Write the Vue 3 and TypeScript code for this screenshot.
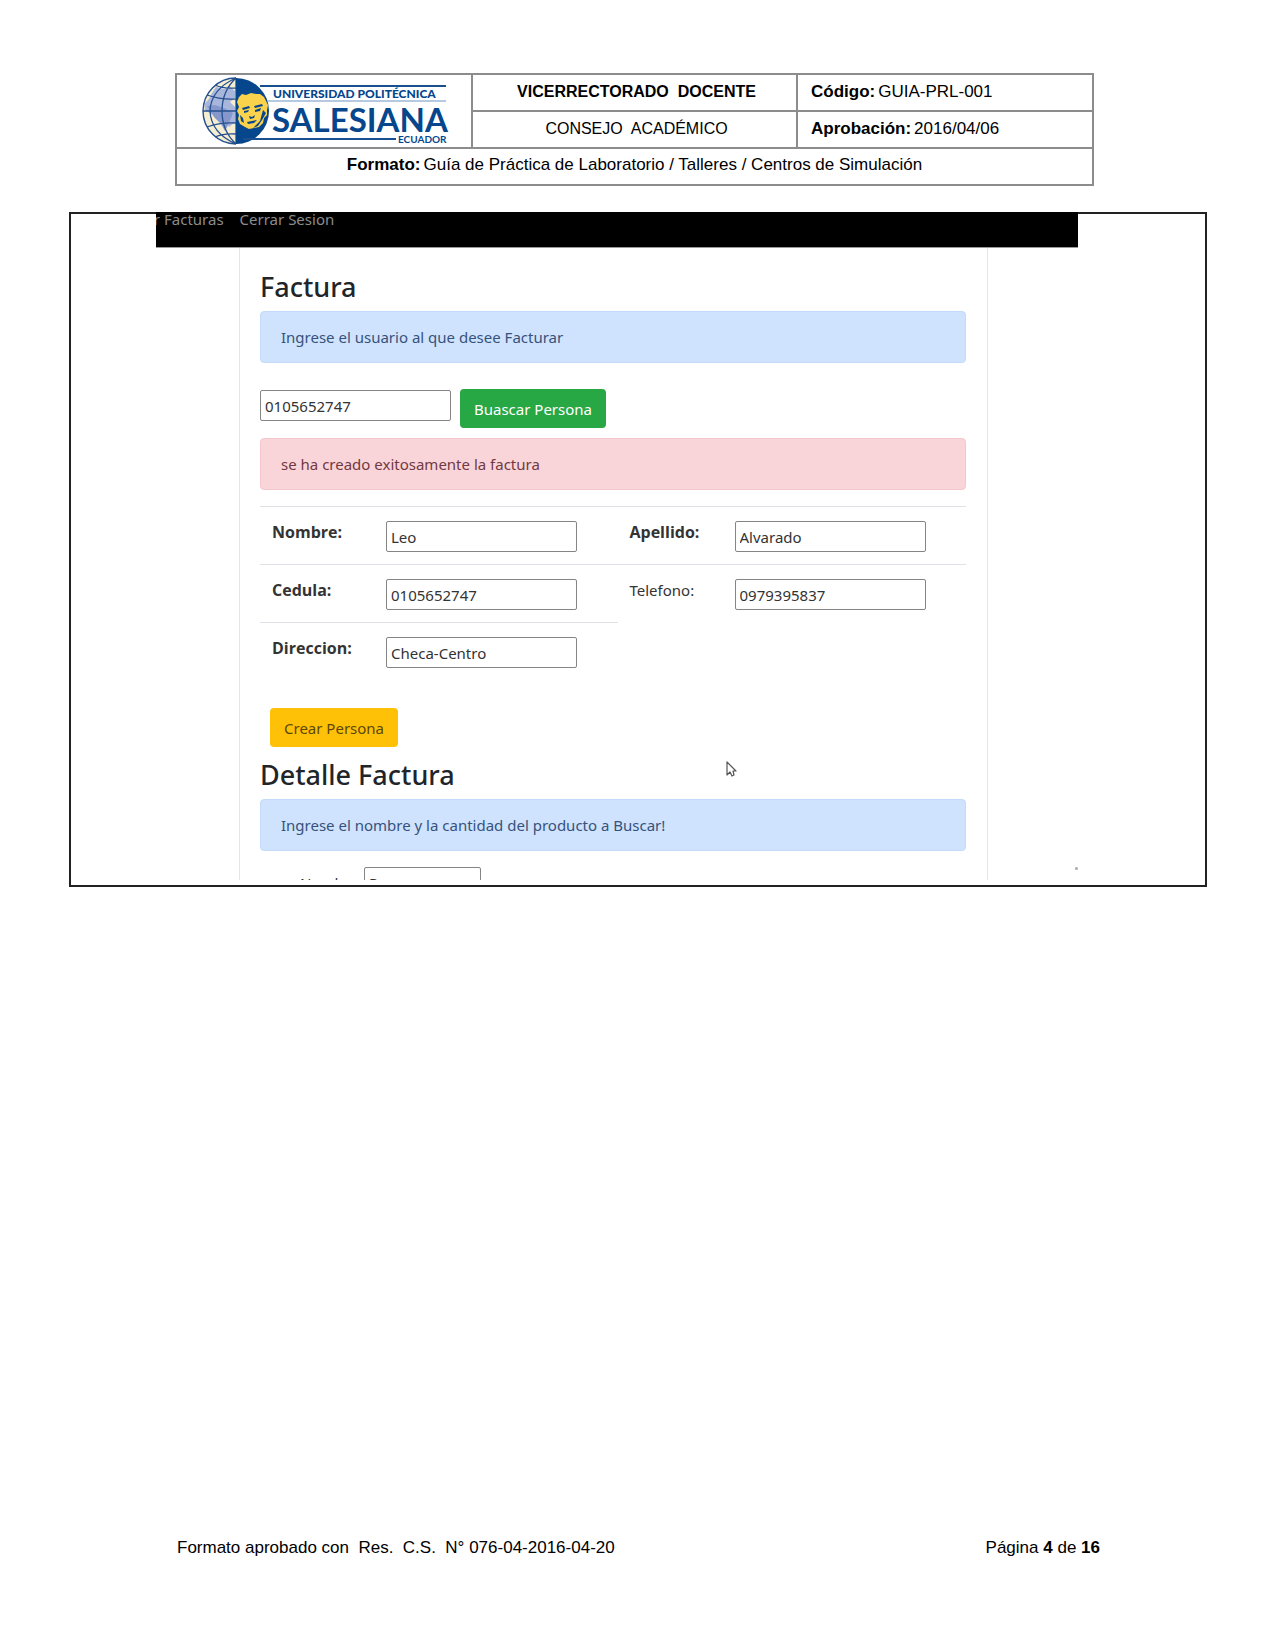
<script setup lang="ts">
import { ref } from 'vue'

interface Field {
  id: string
  label: string
  value: string
  strong: boolean
}

const cedulaBusqueda = ref('0105652747')
const producto = ref('Pera')

const rows = ref<Field[][]>([
  [
    { id: 'nombre', label: 'Nombre:', value: 'Leo', strong: true },
    { id: 'apellido', label: 'Apellido:', value: 'Alvarado', strong: true },
  ],
  [
    { id: 'cedula', label: 'Cedula:', value: '0105652747', strong: true },
    { id: 'telefono', label: 'Telefono:', value: '0979395837', strong: false },
  ],
  [{ id: 'direccion', label: 'Direccion:', value: 'Checa-Centro', strong: true }],
])
</script>

<template>
  <div class="page">
    <header class="doc-header">
      <table class="doc-table">
        <colgroup>
          <col class="col-logo" />
          <col class="col-title" />
          <col class="col-code" />
        </colgroup>
        <tbody>
          <tr>
            <td rowspan="2" class="logo-cell">
              <svg class="logo" viewBox="0 0 250 68" role="img" aria-label="Universidad Politécnica Salesiana Ecuador">
                <circle cx="34" cy="34" r="33" fill="#f6eed2" />
                <path d="M14 10 L22 12 L27 9 L33 14 V21 L28 25 L33 30 V45 L27 50 L23 44 L17 40 L9 37 L3 33 L2 27 L7 22 L10 16 Z" fill="#a9b6dc" />
                <path d="M5 29 L13 28 L22 31 L31 36 L27 46 L23 54 L19 47 L12 40 Z" fill="#8597cb" />
                <path d="M34 1 V67 M1 34 H34 M5 18 Q19 23 34 22 M5 50 Q19 45 34 46 M13 8 Q22 12 34 11 M13 60 Q22 56 34 57 M34 1 Q9 12 8 34 Q9 56 34 67 M34 1 Q20 14 20 34 Q20 54 34 67" fill="none" stroke="#24508f" stroke-width="1.3" />
                <path d="M34 1 A33 33 0 0 0 34 67" fill="none" stroke="#24508f" stroke-width="1.4" />
                <path d="M34 1 A33 33 0 0 1 34 67 Z" fill="#05468c" />
                <path d="M37 20 L40 17 L44 18 L49 16 L54 17 L58 17 L62 20 L64 24 L66 28 L65 33 L65 38 L62 41 L61 46 L57 50 L52 51 L47 52 L43 50 L38 47 L36 42 L37 38 L35 34 L37 30 L35 25 Z" fill="#fbd24b" />
                <path d="M40 31 L47 29 L48 31 L41 33 Z M52 29 L60 27 L61 29 L53 31 Z M42 34 L47 33 L46 35 L42 36 Z M53 33 L59 31 L58 34 L53 35 Z M47 39 L50 40 L53 38 L52 41 L48 42 Z M45 45 L50 44 L55 43 L52 46 L46 47 Z M38 38 L41 41 L42 46 L39 44 Z M61 33 L64 36 L60 43 L56 49 L51 51 L58 44 Z" fill="#05468c" />
                <path d="M58 9 H244 M41 62 H194" stroke="#174f91" stroke-width="2" />
                <path d="M65 24 H244" stroke="#6d93c2" stroke-width="1" />
                <g fill="#05468c" font-family="Lato, sans-serif">
                  <text x="71" y="21" font-size="12" font-weight="900">UNIVERSIDAD POLITÉCNICA</text>
                  <text x="70" y="55" font-size="33" font-weight="700">SALESIANA</text>
                  <text x="196" y="66" font-size="10" font-weight="700">ECUADOR</text>
                </g>
              </svg>
            </td>
            <th scope="col" class="center title">VICERRECTORADO&nbsp; DOCENTE</th>
            <td class="code"><b>Código:</b><span>GUIA-PRL-001</span></td>
          </tr>
          <tr>
            <td class="center title">CONSEJO&nbsp; ACADÉMICO</td>
            <td class="code"><b>Aprobación:</b><span>2016/04/06</span></td>
          </tr>
          <tr>
            <td colspan="3" class="center format"><b>Formato:</b><span>Guía de Práctica de Laboratorio / Talleres / Centros de Simulación</span></td>
          </tr>
        </tbody>
      </table>
    </header>

    <main class="frame">
      <section class="shot">
        <nav class="navbar">
          <span class="nav-rest">r</span>
          <a href="#facturas">Facturas</a>
          <a href="#salir">Cerrar Sesion</a>
        </nav>

        <div class="card">
          <h2>Factura</h2>
          <p class="alert info">Ingrese el usuario al que desee Facturar</p>

          <form class="search" @submit.prevent>
            <input v-model="cedulaBusqueda" class="box" type="text" aria-label="Cedula del usuario" />
            <button type="submit" class="btn green">Buascar Persona</button>
          </form>

          <p class="alert danger">se ha creado exitosamente la factura</p>

          <table class="person">
            <colgroup>
              <col class="c-label" />
              <col class="c-field" />
              <col class="c-label2" />
              <col class="c-field" />
            </colgroup>
            <tbody>
              <tr v-for="(row, i) in rows" :key="i">
                <template v-for="f in row" :key="f.id">
                  <td><label :for="f.id" :class="{ strong: f.strong }">{{ f.label }}</label></td>
                  <td><input :id="f.id" v-model="f.value" class="box" type="text" /></td>
                </template>
              </tr>
            </tbody>
          </table>

          <button type="button" class="btn yellow">Crear Persona</button>

          <h2>Detalle Factura</h2>
          <p class="alert info">Ingrese el nombre y la cantidad del producto a Buscar!</p>

          <div class="product">
            <label for="producto">Nombre:</label>
            <input id="producto" v-model="producto" class="box small" type="text" />
          </div>

          <svg class="cursor" viewBox="0 0 12 18" aria-hidden="true">
            <path d="M1 1 V14 L4 11 L6 15 L8 14 L7 10 H10 Z" fill="#fff" stroke="#555" stroke-width="1.2" stroke-linejoin="round" />
          </svg>
        </div>
        <span class="speck"></span>
      </section>
    </main>

    <footer class="doc-footer">
      <span>Formato aprobado con&nbsp; Res.&nbsp; C.S.&nbsp; N° 076-04-2016-04-20</span>
      <span>Página <b>4</b> de <b>16</b></span>
    </footer>
  </div>
</template>

<style>
body {
  margin: 0;
  background: #fff;
}
</style>

<style scoped>
.page {
  box-sizing: border-box;
  min-height: 100vh;
  display: flex;
  flex-direction: column;
  padding: 73px 68px 92px 69px;
  font-family: 'Liberation Sans', Arial, sans-serif;
  font-size: 17px;
  line-height: 20px;
  color: #000;
}
.doc-header {
  margin: 0 113px 26px 106px;
}
.doc-table {
  width: 100%;
  table-layout: fixed;
  border-collapse: collapse;
}
.col-logo {
  width: 296px;
}
.col-code {
  width: 296px;
}
.doc-table td,
.doc-table th {
  height: 33px;
  padding: 0 0 2px;
  border: 2px solid #8c8c8c;
  vertical-align: middle;
}
.doc-table .logo-cell {
  padding: 0;
}
.doc-table .center {
  text-align: center;
}
.doc-table .title {
  padding-left: 4px;
  font-size: 16px;
}
.doc-table .code {
  padding-left: 13px;
}
.doc-table .format {
  height: 31px;
  padding-bottom: 4px;
}
.doc-table span {
  margin-left: 3px;
}
.logo {
  display: block;
  width: 250px;
  height: 68px;
  margin-left: 25px;
}

.frame {
  border: 2px solid #222;
  padding: 0 127px 5px 85px;
}
.shot {
  position: relative;
  margin-top: -2px;
  font-family: 'Noto Sans', 'Open Sans', sans-serif;
  font-size: 15px;
  line-height: 24px;
  color: #333;
}
.navbar {
  display: flex;
  align-items: flex-start;
  height: 35px;
  overflow: hidden;
  background: #000;
  border-bottom: 1px solid #999;
  line-height: 15px;
}
.navbar a,
.nav-rest {
  color: #8c8c8c;
  text-decoration: none;
}
.nav-rest {
  width: 4px;
  margin-right: 4px;
  direction: rtl;
  overflow: hidden;
}
.navbar a {
  margin-right: 16px;
}

.card {
  position: relative;
  margin: 0 90px 0 83px;
  padding: 21px 21px 0 20px;
  border: solid #e6e6e6;
  border-width: 0 1px;
}
h2 {
  margin: 0 0 7px;
  font-size: 27px;
  line-height: 35px;
  font-weight: 500;
  color: #212529;
}
.alert {
  margin: 0;
  padding: 13px 20px;
  border: 1px solid;
  border-radius: 4px;
}
.info {
  background: #cfe3fe;
  border-color: #c3dafa;
  color: #36527c;
}
.danger {
  background: #f9d5d9;
  border-color: #f5c6cb;
  color: #733841;
}
.search {
  display: flex;
  gap: 9px;
  margin: 26px 0 10px;
}
.box {
  box-sizing: border-box;
  display: block;
  width: 191px;
  height: 31px;
  margin: 1px 0 0;
  padding: 0 4px;
  border: 1px solid #858585;
  border-radius: 2px;
  background: #fff;
  color: #333;
  font: inherit;
}
.btn {
  display: block;
  height: 39px;
  padding: 0 14px;
  border: 0;
  border-radius: 4px;
  font: inherit;
}
.green {
  background: #28a745;
  color: #fff;
}
.yellow {
  margin: 28px 0 10px 10px;
  background: #ffc107;
  color: #5b4708;
}
.person {
  width: 100%;
  margin-top: 16px;
  table-layout: fixed;
  border-collapse: separate;
  border-spacing: 0;
}
.person td {
  height: 44px;
  padding: 13px 0 0 12px;
  border-top: 1px solid #dee2e6;
  vertical-align: top;
}
.c-label {
  width: 114px;
}
.c-label2 {
  width: 105px;
}
.person label {
  display: block;
}
.strong {
  font-family: 'Open Sans', 'Noto Sans', sans-serif;
  font-size: 16px;
  font-weight: 700;
}
.product {
  display: flex;
  height: 14px;
  margin-top: 15px;
  padding-left: 40px;
  overflow: hidden;
}
.product label {
  width: 64px;
  padding-top: 5px;
}
.small {
  width: 117px;
}
.cursor {
  position: absolute;
  left: 486px;
  bottom: 101px;
  width: 12px;
  height: 18px;
}
.speck {
  position: absolute;
  right: 0;
  bottom: 10px;
  width: 3px;
  height: 3px;
  border-radius: 50%;
  background: #aaa;
}

.doc-footer {
  display: flex;
  justify-content: space-between;
  margin: auto 107px 0 108px;
}
</style>
